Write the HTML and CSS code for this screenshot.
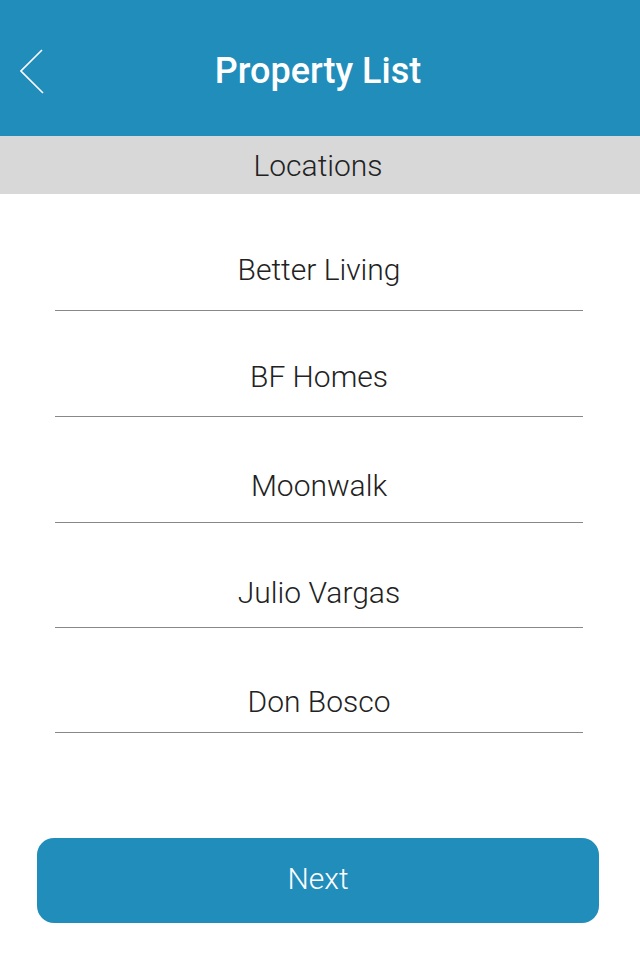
FILE: index.html
```html
<!DOCTYPE html>
<html>
<head>
<meta charset="utf-8">
<link rel="stylesheet" href="styles.css">
</head>
<body>
<div class="app">
  <header class="header">
    <svg class="back" width="30" height="50" viewBox="0 0 30 50"><polyline points="22,1 1,22 23,44" fill="none" stroke="#fff" stroke-width="1.6"/></svg>
    <h1 class="title">Property List</h1>
  </header>
  <div class="section">Locations</div>
  <ul class="list">
    <li class="item">Better Living</li>
    <li class="item">BF Homes</li>
    <li class="item">Moonwalk</li>
    <li class="item">Julio Vargas</li>
    <li class="item">Don Bosco</li>
  </ul>
  <div class="footer">
    <button class="next">Next</button>
  </div>
</div>
</body>
</html>
```
FILE: styles.css
```css
* { box-sizing: border-box; }
html, body { margin: 0; padding: 0; background: #fff; }
body { font-family: Roboto, "Noto Sans", sans-serif; }
.app { width: 640px; height: 960px; display: flex; flex-direction: column; }
.header {
  position: relative;
  height: 136px;
  background: #218dbb;
  display: flex;
  align-items: center;
  justify-content: center;
  padding: 5px 4px 0 0;
}
.back { position: absolute; left: 20px; top: 49px; }
.title {
  margin: 0;
  color: #fff;
  font-size: 36px;
  font-weight: 500;
}
.section {
  height: 58px;
  background: #d8d8d8;
  display: flex;
  align-items: center;
  justify-content: center;
  padding: 1px 4px 0 0;
  font-size: 30px;
  font-weight: 300;
  color: #222;
}
.list { list-style: none; margin: 0; padding: 11px 57px 0 55px; }
.item {
  height: 106px;
  border-bottom: 1px solid #888;
  display: flex;
  align-items: flex-end;
  justify-content: center;
  padding-bottom: 23px;
  font-size: 30px;
  line-height: 35px;
  font-weight: 300;
  color: #222;
}
.item:nth-child(2) { padding-bottom: 22px; }
.item:nth-child(3) { padding-bottom: 19px; }
.item:nth-child(4) { height: 105px; padding-bottom: 17px; }
.item:nth-child(5) { height: 105px; padding-bottom: 13px; }
.footer { margin-top: auto; padding: 0 41px 37px 37px; }
.next {
  width: 100%;
  height: 85px;
  border: none;
  border-radius: 17px;
  background: #218dbb;
  color: #fff;
  font-family: Roboto, sans-serif;
  font-size: 30px;
  font-weight: 300;
  padding: 0 0 5px 0;
}
```
